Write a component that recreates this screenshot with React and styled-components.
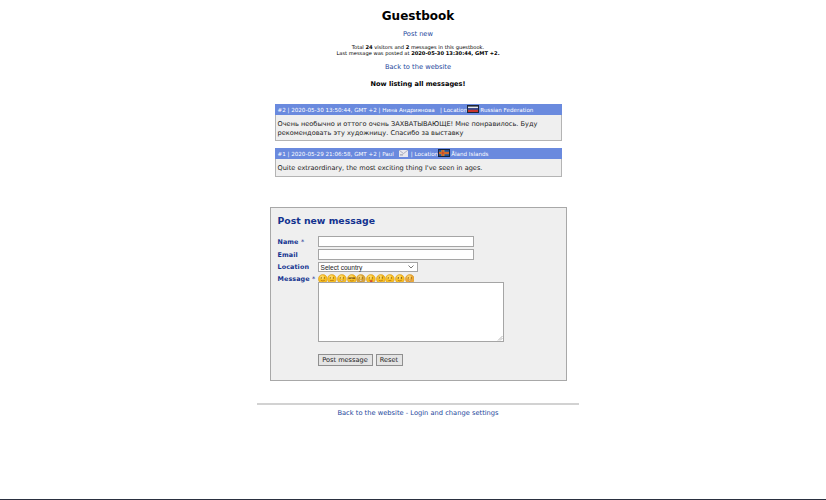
import React from "react";
import styled, { createGlobalStyle } from "styled-components";

const GlobalStyle = createGlobalStyle`
  html, body {
    margin: 0;
    padding: 0;
    background: #fff;
  }
  body {
    font-family: "DejaVu Sans", Verdana, sans-serif;
    color: #000;
    overflow: hidden;
  }
`;

const Screen = styled.div`
  box-sizing: border-box;
  height: 500px;
  padding-left: 10px;
  border-bottom: 1px solid #2a3040;
  overflow: hidden;
`;

const Page = styled.div`
  width: 322px;
  margin: 0 auto;
  display: flex;
  flex-direction: column;
  align-items: center;
`;

const Title = styled.h1`
  margin: 9px 0 0;
  font-size: 12px;
  line-height: 15px;
  font-weight: bold;
`;

const Link = styled.a`
  color: #25479c;
  text-decoration: none;
`;

const LinkLine = styled.p`
  margin: ${props => props.$top}px 0 0;
  font-size: 6.7px;
  line-height: 9px;
  text-align: center;
  color: #25479c;
`;

const Stats = styled.p`
  margin: 5px 0 0;
  font-size: 5.15px;
  line-height: 6px;
  text-align: center;
`;

const Listing = styled.p`
  margin: 8px 0 0;
  font-size: 6.6px;
  line-height: 9px;
  font-weight: bold;
  text-align: center;
`;

const Message = styled.div`
  box-sizing: border-box;
  width: 287px;
  margin-top: ${props => props.$top}px;
  background: #efefef;
  border: 1px solid #b4b4b4;
  border-top: 0;
`;

const MessageHead = styled.div`
  display: flex;
  align-items: center;
  height: 11px;
  margin: 0 -1px;
  padding-left: 3px;
  background: #6a8ade;
  color: #fff;
  font-size: 5.6px;
  white-space: pre;
`;

const MessageBody = styled.div`
  padding: 5px 2px 0;
  height: ${props => props.$h}px;
  box-sizing: border-box;
  font-size: 6.6px;
  line-height: 9px;
  color: #222;
`;

const Flag = styled.svg`
  width: 12px;
  height: 8px;
  margin: 0 1px 2px 0;
  flex: none;
`;

const Mail = styled.svg`
  width: 9px;
  height: 7px;
  margin: 0 3px 0 5px;
  flex: none;
`;

const FormBox = styled.form`
  box-sizing: border-box;
  width: 297px;
  height: 174px;
  margin-top: 30px;
  padding: 7px 7px 0;
  background: #efefef;
  border: 1px solid #a8a8a8;
`;

const FormTitle = styled.h2`
  margin: 0 0 10px;
  font-size: 9.3px;
  line-height: 11px;
  color: #13338f;
  font-weight: bold;
`;

const Row = styled.div`
  display: grid;
  grid-template-columns: 40px auto;
  align-items: start;
  margin-bottom: ${props => props.$gap}px;
`;

const Label = styled.label`
  padding-top: 1px;
  font-size: 6.4px;
  line-height: ${props => props.$line}px;
  font-weight: bold;
  color: #13338f;
  letter-spacing: 0.1px;
`;

const Star = styled.span`
  font-weight: normal;
  color: #13338f;
`;

const TextInput = styled.input`
  display: block;
  box-sizing: border-box;
  width: 156px;
  height: 11px;
  padding: 0;
  background: #fff;
  border: 1px solid #a5a5a5;
`;

const CountryBox = styled.div`
  display: flex;
  align-items: center;
  justify-content: space-between;
  box-sizing: border-box;
  width: 100px;
  height: 10px;
  padding: 0 3px 0 2px;
  background: #fff;
  border: 1px solid #a5a5a5;
  font-family: "Liberation Sans", Arial, sans-serif;
  font-size: 6.6px;
  color: #222;
`;

const Smileys = styled.div`
  display: flex;
  height: 9px;
`;

const Field = styled.div`
  display: flex;
  flex-direction: column;
`;

const MessageArea = styled.div`
  position: relative;
  box-sizing: border-box;
  width: 186px;
  height: 60px;
  margin-top: -1px;
  background: #fff;
  border: 1px solid #a5a5a5;
`;

const Grip = styled.svg`
  position: absolute;
  right: 0;
  bottom: 0;
  width: 6px;
  height: 6px;
`;

const Actions = styled.div`
  display: flex;
  gap: 3px;
  margin: 12px 0 0 40px;
`;

const Button = styled.button`
  box-sizing: border-box;
  height: 12px;
  width: ${props => props.$w}px;
  padding: 0;
  background: #e4e4e4;
  border: 1px solid #8f8f8f;
  font-family: "DejaVu Sans", Verdana, sans-serif;
  font-size: 6.6px;
  line-height: 9px;
  color: #222;
`;

const Rule = styled.div`
  width: 100%;
  height: 2px;
  margin-top: 22px;
  background: #d2d2d2;
`;

const FooterLine = styled.p`
  margin: 4px 0 0;
  font-size: 6.7px;
  line-height: 9px;
  color: #25479c;
`;

const smileyKinds = [
  { mouth: "M3 6.4q2 1.2 4 0" },
  { mouth: "M3 6.5h4" },
  { mouth: "M2.8 6q2.2 2.2 4.4 0", teeth: true },
  { mouth: "M3 6.6q2 1 4 0", shades: true },
  { mouth: "M2.8 6q2.2 2.4 4.4 0", tint: "#d9a53a", teeth: true },
  { mouth: "M3 6q2 1 4 0", tongue: true },
  { mouth: "M3 6.3q2 1.4 4 0", brows: true },
  { mouth: "M3.5 6.6h3" },
  { mouth: "M3 6.3q2 1.4 4 0", dark: true },
  { mouth: "M3 6q2 2 4 0", teeth: true, tint: "#eda93a" },
];

const Smiley = ({ mouth, shades, teeth, tongue, tint, brows, dark }) => (
  <svg width="9.7" height="10" viewBox="0 0 10 10">
    <circle cx="5" cy="5" r="4.6" fill={tint || "#f8bf22"} stroke="#d0921a" strokeWidth="0.5" />
    <circle cx="4.2" cy="3.2" r="2.2" fill="#fde07a" opacity="0.75" />
    {shades ? (
      <path d="M1.5 3.4h7v1.3h-2.6l-.9-.5-.9.5H1.5z" fill="#6b4310" />
    ) : (
      <>
        <circle cx="3.4" cy="3.9" r="0.7" fill={dark ? "#4a2c00" : "#8a5a00"} />
        <circle cx="6.6" cy="3.9" r="0.7" fill={dark ? "#4a2c00" : "#8a5a00"} />
      </>
    )}
    {brows && <path d="M2.5 2.6l1.6.5M7.5 2.6l-1.6.5" stroke="#8a5a00" strokeWidth="0.5" />}
    <path d={mouth} fill={teeth ? "#fff" : "none"} stroke="#9a5a08" strokeWidth="0.6" />
    {tongue && <ellipse cx="5.4" cy="7.4" rx="1.3" ry="1.2" fill="#d8433a" />}
  </svg>
);

const RussianFlag = () => (
  <Flag viewBox="0 0 12 8">
    <rect width="12" height="8" fill="#1b2438" />
    <rect x="1" y="1.6" width="10" height="1.6" fill="#e8e8e8" />
    <rect x="1" y="3.2" width="10" height="1.6" fill="#3a4fa0" />
    <rect x="1" y="4.8" width="10" height="2.2" fill="#c8342c" />
  </Flag>
);

const AlandFlag = () => (
  <Flag viewBox="0 0 12 8">
    <rect width="12" height="8" fill="#14233f" />
    <rect x="1" y="1" width="10" height="6" fill="#1f4f9c" />
    <rect x="3.4" y="1" width="3" height="6" fill="#d89a2c" />
    <rect x="1" y="2.8" width="10" height="2.4" fill="#d89a2c" />
    <rect x="4.4" y="1" width="1" height="6" fill="#c8342c" />
    <rect x="1" y="3.5" width="10" height="1" fill="#c8342c" />
  </Flag>
);

const MailIcon = () => (
  <Mail viewBox="0 0 9 7">
    <rect width="9" height="7" fill="#e8e8ee" />
    <path d="M0 0l4.5 3.6L9 0" fill="none" stroke="#9aa0b4" strokeWidth="0.8" />
    <rect x="1" y="4.4" width="3" height="1" fill="#8f95aa" />
  </Mail>
);

const App = () => (
  <Screen>
    <GlobalStyle />
    <Page>
      <Title>Guestbook</Title>
      <LinkLine $top={6}>
        <Link href="#">Post new</Link>
      </LinkLine>
      <Stats>
        Total <b>24</b> visitors and <b>2</b> messages in this guestbook.
        <br />
        Last message was posted at <b>2020-05-30 13:30:44, GMT +2.</b>
      </Stats>
      <LinkLine $top={7}>
        <Link href="#">Back to the website</Link>
      </LinkLine>
      <Listing>Now listing all messages!</Listing>

      <Message $top={15}>
        <MessageHead>
          #2 | 2020-05-30 13:50:44, GMT +2 | Нина Андриянова {"  "}| Location
          <RussianFlag />
          Russian Federation
        </MessageHead>
        <MessageBody $h={25}>
          Очень необычно и оттого очень ЗАХВАТЫВАЮЩЕ! Мне понравилось. Буду
          рекомендовать эту художницу. Спасибо за выставку
        </MessageBody>
      </Message>

      <Message $top={7}>
        <MessageHead>
          #1 | 2020-05-29 21:06:58, GMT +2 | Paul
          <MailIcon />| Location
          <AlandFlag />
          Åland Islands
        </MessageHead>
        <MessageBody $h={17}>
          Quite extraordinary, the most exciting thing I've seen in ages.
        </MessageBody>
      </Message>

      <FormBox onSubmit={e => e.preventDefault()}>
        <FormTitle>Post new message</FormTitle>
        <Row $gap={2}>
          <Label $line={10}>
            Name <Star>*</Star>
          </Label>
          <TextInput />
        </Row>
        <Row $gap={2}>
          <Label $line={10}>Email</Label>
          <TextInput />
        </Row>
        <Row $gap={2}>
          <Label $line={9}>Location</Label>
          <CountryBox>
            Select country
            <svg width="6" height="4" viewBox="0 0 6 4">
              <path d="M.5.5L3 3 5.5.5" fill="none" stroke="#555" strokeWidth="0.8" />
            </svg>
          </CountryBox>
        </Row>
        <Row $gap={0}>
          <Label $line={8}>
            Message <Star>*</Star>
          </Label>
          <Field>
            <Smileys>
              {smileyKinds.map((s, i) => (
                <Smiley key={i} {...s} />
              ))}
            </Smileys>
            <MessageArea>
              <Grip viewBox="0 0 6 6">
                <path d="M1 5.5L5.5 1M3 5.5L5.5 3" stroke="#888" strokeWidth="0.6" />
              </Grip>
            </MessageArea>
          </Field>
        </Row>
        <Actions>
          <Button type="button" $w={55}>
            Post message
          </Button>
          <Button type="button" $w={27}>
            Reset
          </Button>
        </Actions>
      </FormBox>

      <Rule />
      <FooterLine>
        <Link href="#">Back to the website</Link> -{" "}
        <Link href="#">Login and change settings</Link>
      </FooterLine>
    </Page>
  </Screen>
);

export default App;
